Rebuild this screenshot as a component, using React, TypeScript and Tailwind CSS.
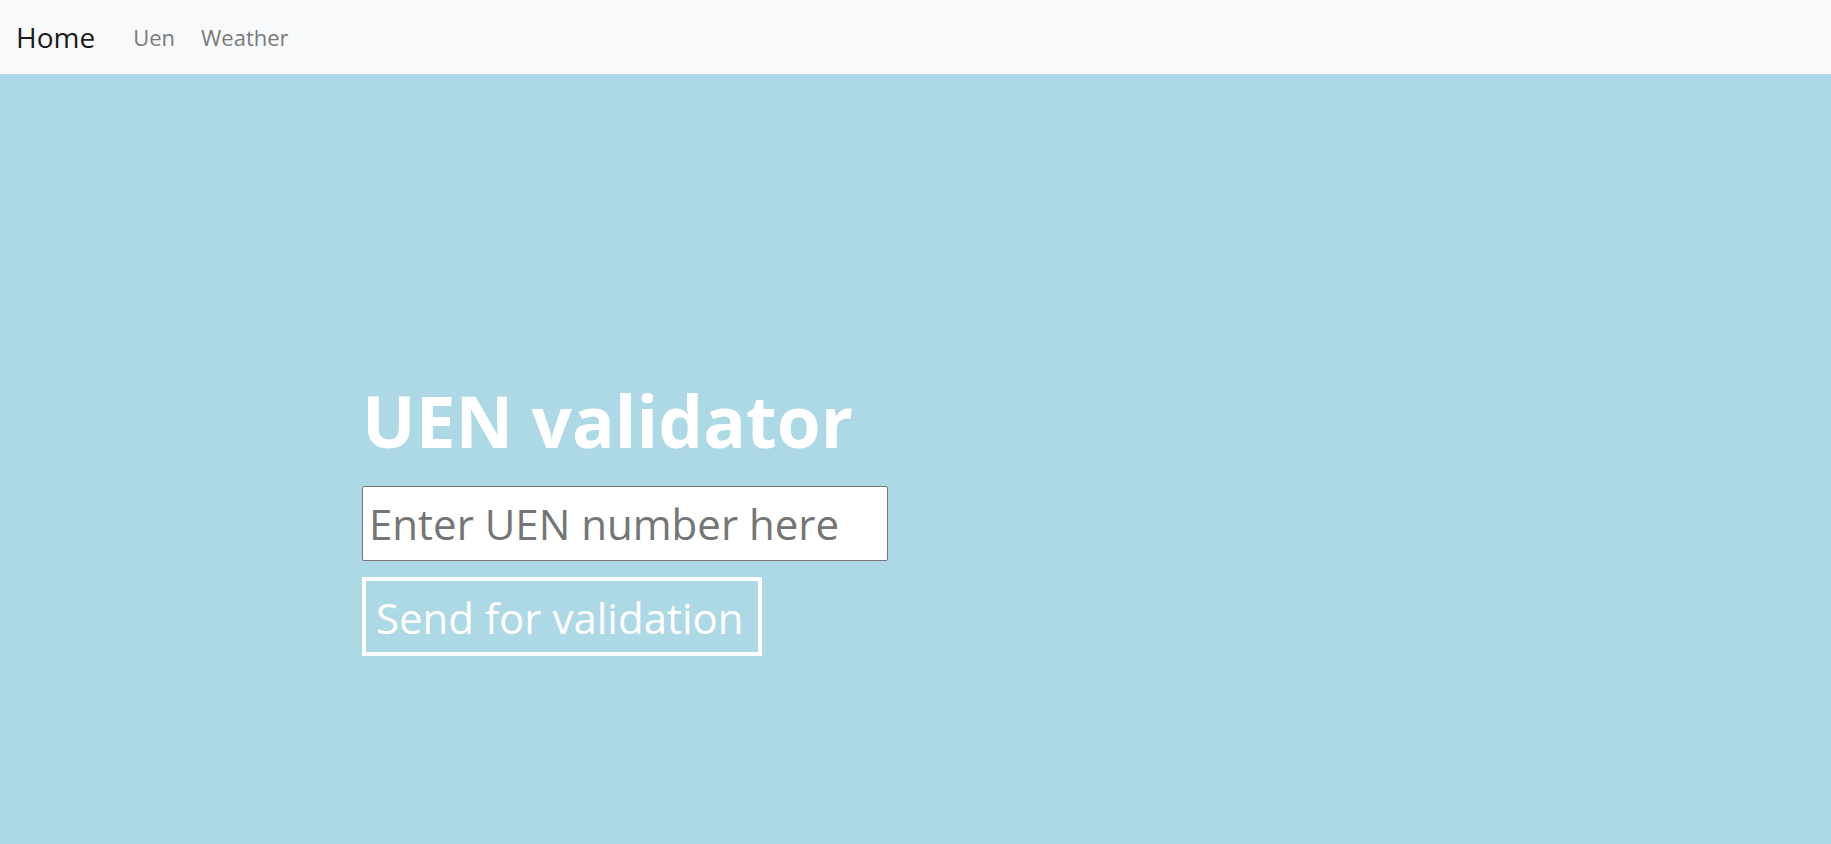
import React from "react";

export default function App() {
  const font = { fontFamily: '"Open Sans", "Noto Sans", sans-serif' };
  return (
    <div className="w-[1831px] h-[844px] flex flex-col bg-[#add8e6]" style={font}>
      <nav className="h-[74px] bg-[#f8f9fa] flex items-center pl-[16px] shrink-0">
        <span className="text-[28px] text-[#1a1a1a] leading-none">Home</span>
        <span className="ml-[38px] text-[22px] text-[#7a7a7a] leading-none">Uen</span>
        <span className="ml-[26px] text-[22px] text-[#7a7a7a] leading-none">Weather</span>
      </nav>
      <main className="flex-1 pl-[362px] pt-[311px]">
        <h1 className="text-[71px] font-bold text-white leading-none">UEN validator</h1>
        <input
          className="mt-[30px] block w-[526px] h-[75px] bg-white border border-[#767676] rounded-[2px] px-[6px] text-[42px] text-black placeholder:text-[#757575] outline-none"
          placeholder="Enter UEN number here"
        />
        <button className="mt-[16px] block w-[400px] h-[79px] border-4 border-white pl-[10px] pr-0 pt-[3px] text-[42px] text-white leading-none text-left whitespace-nowrap">
          Send for validation
        </button>
      </main>
    </div>
  );
}
